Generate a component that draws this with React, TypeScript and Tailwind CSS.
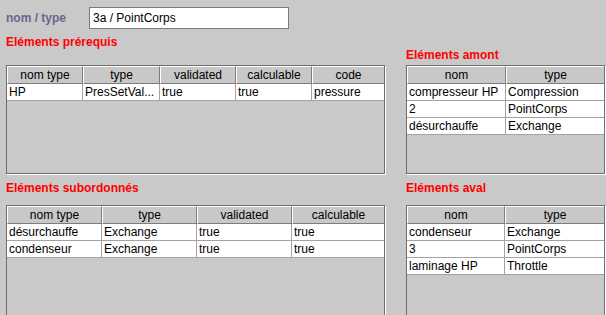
import React from "react";

type Col = { label: string; w?: string };

function Table({ cols, rows, h }: { cols: Col[]; rows: string[][]; h: string }) {
  return (
    <div className={`border border-[#6f6f6f] shadow-[1px_1px_0_#ffffff] overflow-hidden flex flex-col ${h}`}>
      <div className="flex h-[18px] shrink-0">
        {cols.map((c, i) => (
          <div
            key={i}
            className={`${c.w ?? "flex-1"} h-[18px] flex items-center justify-center border-t border-l border-t-white border-l-white border-b border-b-[#7c7c7c] ${
              i < cols.length - 1 ? "border-r border-r-[#7c7c7c]" : ""
            } bg-[#c8c8c8] text-black`}
          >
            {c.label}
          </div>
        ))}
      </div>
      {rows.map((r, ri) => (
        <div key={ri} className="flex h-[17px] shrink-0 bg-white">
          {r.map((v, i) => (
            <div
              key={i}
              className={`${cols[i].w ?? "flex-1"} h-[17px] flex items-center pl-[2px] whitespace-nowrap overflow-hidden border-b border-b-[#a3a3a3] ${
                i < cols.length - 1 ? "border-r border-r-[#a3a3a3]" : ""
              } text-black`}
            >
              {v}
            </div>
          ))}
        </div>
      ))}
    </div>
  );
}

export default function App() {
  return (
    <div className="w-[606px] h-[315px] overflow-hidden bg-[#c9c9c9] text-[12px] leading-[14px] font-['Liberation_Sans',Arial,sans-serif]">
      <div className="flex items-center pl-[6px] pt-[7px]">
        <span className="w-[83px] font-bold text-[#66668f]">nom / type</span>
        <div className="w-[200px] h-[22px] border border-[#7a7a7a] bg-white pl-[3px] flex items-center text-black">
          3a / PointCorps
        </div>
      </div>

      <div className="flex pl-[6px] gap-[21px]">
        <div className="w-[379px] flex flex-col">
          <div className="mt-[6px] h-[14px] font-bold text-[#ff0000]">Eléments prérequis</div>
          <div className="mt-[16px]">
            <Table
              h="h-[109px]"
              cols={[
                { label: "nom type", w: "w-[76px]" },
                { label: "type", w: "w-[77px]" },
                { label: "validated", w: "w-[76px]" },
                { label: "calculable", w: "w-[76px]" },
                { label: "code" },
              ]}
              rows={[["HP", "PresSetVal...", "true", "true", "pressure"]]}
            />
          </div>
        </div>
        <div className="w-[199px] flex flex-col">
          <div className="mt-[19px] h-[14px] font-bold text-[#ff0000]">Eléments amont</div>
          <div className="mt-[3px]">
            <Table
              h="h-[109px]"
              cols={[{ label: "nom", w: "w-[99px]" }, { label: "type" }]}
              rows={[
                ["compresseur HP", "Compression"],
                ["2", "PointCorps"],
                ["désurchauffe", "Exchange"],
              ]}
            />
          </div>
        </div>
      </div>

      <div className="flex pl-[6px] gap-[21px] mt-[7px]">
        <div className="w-[379px] flex flex-col">
          <div className="h-[14px] font-bold text-[#ff0000]">Eléments subordonnés</div>
          <div className="mt-[10px]">
            <Table
              h="h-[130px]"
              cols={[
                { label: "nom type", w: "w-[95px]" },
                { label: "type", w: "w-[95px]" },
                { label: "validated", w: "w-[95px]" },
                { label: "calculable" },
              ]}
              rows={[
                ["désurchauffe", "Exchange", "true", "true"],
                ["condenseur", "Exchange", "true", "true"],
              ]}
            />
          </div>
        </div>
        <div className="w-[199px] flex flex-col">
          <div className="h-[14px] font-bold text-[#ff0000]">Eléments aval</div>
          <div className="mt-[10px]">
            <Table
              h="h-[130px]"
              cols={[{ label: "nom", w: "w-[98px]" }, { label: "type" }]}
              rows={[
                ["condenseur", "Exchange"],
                ["3", "PointCorps"],
                ["laminage HP", "Throttle"],
              ]}
            />
          </div>
        </div>
      </div>
    </div>
  );
}
